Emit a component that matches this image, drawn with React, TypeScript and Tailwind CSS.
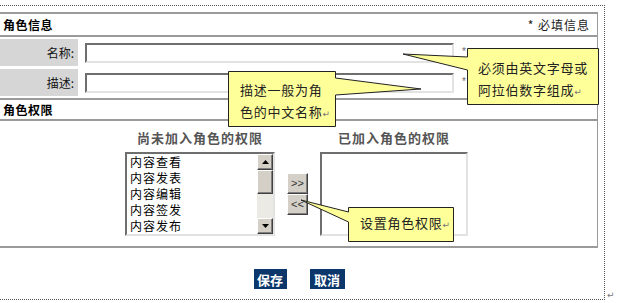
const perms = ['内容查看', '内容发表', '内容编辑', '内容签发', '内容发布'];

function Ret() {
  return <span className="text-[9px] tracking-normal text-[#777] font-['DejaVu_Sans',sans-serif]">↵</span>;
}

function FieldRow({ label }: { label: string }) {
  return (
    <div className="h-[27px] flex items-center">
      <div className="w-[78px] h-full bg-[#d6d6d6] flex items-center justify-end pr-[4px] text-[12px] leading-none text-[#111]">
        {label}
      </div>
      <div className="ml-[7px] w-[369px] h-[20px] bg-white border-2 border-t-[#6e6e6e] border-l-[#6e6e6e] border-r-[#e2e2e2] border-b-[#e2e2e2]" />
      <span className="ml-[8px] self-start mt-[8px] text-[10px] leading-none text-[#666] font-['Liberation_Sans',sans-serif]">*</span>
    </div>
  );
}

function ScrollBtn({ up }: { up?: boolean }) {
  return (
    <div className="w-[16px] h-[16px] bg-[#d4d0c8] border border-t-white border-l-white border-r-[#404040] border-b-[#404040] shadow-[inset_-1px_-1px_0_#808080] flex items-center justify-center">
      <svg width="7" height="4" viewBox="0 0 7 4">
        {up ? <polygon points="3.5,0 7,4 0,4" fill="#000" /> : <polygon points="0,0 7,0 3.5,4" fill="#000" />}
      </svg>
    </div>
  );
}

function MoveBtn({ label }: { label: string }) {
  return (
    <div className="w-[21px] h-[21px] bg-[#d4d0c8] border border-t-white border-l-white border-r-[#404040] border-b-[#404040] shadow-[inset_-1px_-1px_0_#808080] flex items-center justify-center text-[11px] leading-none text-[#333] font-['Liberation_Sans',sans-serif]">
      {label}
    </div>
  );
}

export default function App() {
  return (
    <div className="relative w-[622px] h-[303px] bg-white overflow-hidden font-['Noto_Sans_CJK_SC','Liberation_Sans',sans-serif] text-black">
      <div className="mt-[5px] w-[605px] h-[295px] border-t border-r border-b border-dotted border-[#555] pt-[6px]">
        <div className="w-[598px] border-t-2 border-r border-b-2 border-[#9a9a9a]">
          {/* 角色信息 */}
          <div className="h-[23px] flex items-center justify-between pl-[3px] pr-[7px] border-b-2 border-[#9a9a9a]">
            <span className="text-[12px] font-bold tracking-[0.5px] leading-none">角色信息</span>
            <span className="text-[12px] tracking-[1px] leading-none text-[#222]">* 必填信息</span>
          </div>
          <div className="py-[2px] flex flex-col gap-[3px]">
            <FieldRow label="名称:" />
            <FieldRow label="描述:" />
          </div>

          {/* 角色权限 */}
          <div className="h-[23px] flex items-center pl-[3px] border-t-2 border-b-2 border-[#9a9a9a]">
            <span className="text-[12px] font-bold tracking-[0.5px] leading-none">角色权限</span>
          </div>
          <div className="h-[125px] flex pl-[125px] pt-[10px]">
            <div className="w-[150px] flex flex-col items-center">
              <div className="h-[14px] text-[13px] font-bold tracking-[1px] leading-[14px] text-[#555] whitespace-nowrap">尚未加入角色的权限</div>
              <div className="mt-[7px] w-[150px] h-[84px] flex bg-white border-2 border-t-[#6e6e6e] border-l-[#6e6e6e] border-r-[#e2e2e2] border-b-[#e2e2e2]">
                <div className="flex-1 pl-[3px] flex flex-col">
                  {perms.map((p) => (
                    <div key={p} className="h-[16px] flex items-center text-[12px] tracking-[1px] leading-none text-black">{p}</div>
                  ))}
                </div>
                <div className="w-[16px] h-full flex flex-col bg-[#ebeae4]">
                  <ScrollBtn up />
                  <div className="h-[24px] bg-[#d4d0c8] border border-t-white border-l-white border-r-[#404040] border-b-[#404040] shadow-[inset_-1px_-1px_0_#808080]" />
                  <div className="flex-1" />
                  <ScrollBtn />
                </div>
              </div>
            </div>
            <div className="ml-[12px] mt-[42px] self-start flex flex-col">
              <MoveBtn label=">>" />
              <MoveBtn label="<<" />
            </div>
            <div className="ml-[12px] w-[148px] flex flex-col items-center">
              <div className="h-[14px] text-[13px] font-bold tracking-[1px] leading-[14px] text-[#555] whitespace-nowrap">已加入角色的权限</div>
              <div className="mt-[7px] w-[148px] h-[84px] bg-white border-2 border-t-[#6e6e6e] border-l-[#6e6e6e] border-r-[#e2e2e2] border-b-[#e2e2e2]" />
            </div>
          </div>
        </div>

        <div className="mt-[21px] w-[598px] flex justify-center gap-[23px]">
          <button className="w-[33px] h-[20px] bg-[#0b376a] text-white text-[13px] font-bold leading-none">保存</button>
          <button className="w-[35px] h-[20px] bg-[#0b376a] text-white text-[13px] font-bold leading-none">取消</button>
        </div>
      </div>

      <span className="absolute left-[607px] top-[289px] text-[9px] text-[#777] font-['DejaVu_Sans',sans-serif]">↵</span>

      {/* callouts */}
      <svg className="absolute inset-0 pointer-events-none" width="622" height="303" viewBox="0 0 622 303">
        <path d="M467.5,48.5 H598.5 V104.5 H467.5 V70 L403,54 L467.5,57 Z" fill="#ffff99" stroke="#222" strokeWidth="1" />
        <path d="M228.5,71.5 H335.5 V78 L421,89 L335.5,95 V126.5 H228.5 Z" fill="#ffff99" stroke="#222" strokeWidth="1" />
        <path d="M348.5,207.5 H453.5 V241.5 H348.5 V222 L301,200 L348.5,212 Z" fill="#ffff99" stroke="#222" strokeWidth="1" />
      </svg>
      <div className="absolute left-[478px] top-[57px] text-[13px] leading-[22px] tracking-[0.75px] text-[#222] whitespace-nowrap">
        必须由英文字母或<br />阿拉伯数字组成<Ret />
      </div>
      <div className="absolute left-[240px] top-[79px] text-[13px] leading-[22px] tracking-[0.75px] text-[#222] whitespace-nowrap">
        描述一般为角<br />色的中文名称<Ret />
      </div>
      <div className="absolute left-[360px] top-[212px] text-[13px] leading-[22px] tracking-[0.75px] text-[#222] whitespace-nowrap">
        设置角色权限<Ret />
      </div>
    </div>
  );
}
